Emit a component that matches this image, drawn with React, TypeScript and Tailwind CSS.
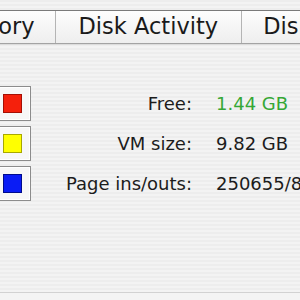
type Row = {
  swatch: string;
  edge: string;
  label: string;
  value: string;
  valueClass: string;
};

const ROWS: Row[] = [
  { swatch: 'bg-[#f5200c]', edge: 'border-[#a51005]', label: 'Free:', value: '1.44 GB', valueClass: 'text-[#35a735]' },
  { swatch: 'bg-[#ffff00]', edge: 'border-[#a8a800]', label: 'VM size:', value: '9.82 GB', valueClass: 'text-[#1c1c1c]' },
  { swatch: 'bg-[#0a1cf5]', edge: 'border-[#000c8c]', label: 'Page ins/outs:', value: '250655/86312', valueClass: 'text-[#1c1c1c]' },
];

function Swatch({ row }: { row: Row }) {
  return (
    <div className="w-[37px] h-[35px] shrink-0 border border-[#8c8c8c] bg-[#f7f7f7] shadow-[inset_0_0_0_1px_#ffffff] flex items-center justify-center">
      <div className={`w-[19px] h-[19px] border ${row.swatch} ${row.edge}`} />
    </div>
  );
}

export default function App() {
  return (
    <div className="w-[300px] h-[300px] overflow-hidden flex flex-col font-['DejaVu_Sans',sans-serif] bg-[repeating-linear-gradient(180deg,#ededed_0px,#ededed_2px,#f3f3f3_2px,#f3f3f3_4px)]">
      <div className="h-[10px] shrink-0" />

      {/* tab strip */}
      <div className="h-[34px] shrink-0 border-t border-t-[#7a7a7a] border-b border-b-[#a3a3a3] bg-[linear-gradient(180deg,#fdfdfd,#eeeeee)] shadow-[0_1px_0_#dcdcdc] flex items-center whitespace-nowrap text-[22.5px] text-[#1a1a1a]">
        <div className="ml-[-57px] pr-[20px] h-full flex items-center border-r border-r-[#b4b4b4]">Memory</div>
        <div className="px-[23px] h-full flex items-center border-r border-r-[#b4b4b4]">Disk Activity</div>
        <div className="pl-[21px] h-full flex items-center">Disk Usage</div>
      </div>

      {/* legend rows */}
      <div className="mt-[42px] ml-[-6px] flex flex-col gap-[5px] text-[18px] text-[#1c1c1c] whitespace-nowrap">
        {ROWS.map((row) => (
          <div key={row.label} className="flex items-center h-[35px]">
            <Swatch row={row} />
            <div className="w-[161px] shrink-0 text-right">{row.label}</div>
            <div className={`ml-[24px] ${row.valueClass}`}>{row.value}</div>
          </div>
        ))}
      </div>

      <div className="mt-auto h-[8px] shrink-0 border-t border-t-[#d2d2d2] bg-[#f4f4f4]" />
    </div>
  );
}
